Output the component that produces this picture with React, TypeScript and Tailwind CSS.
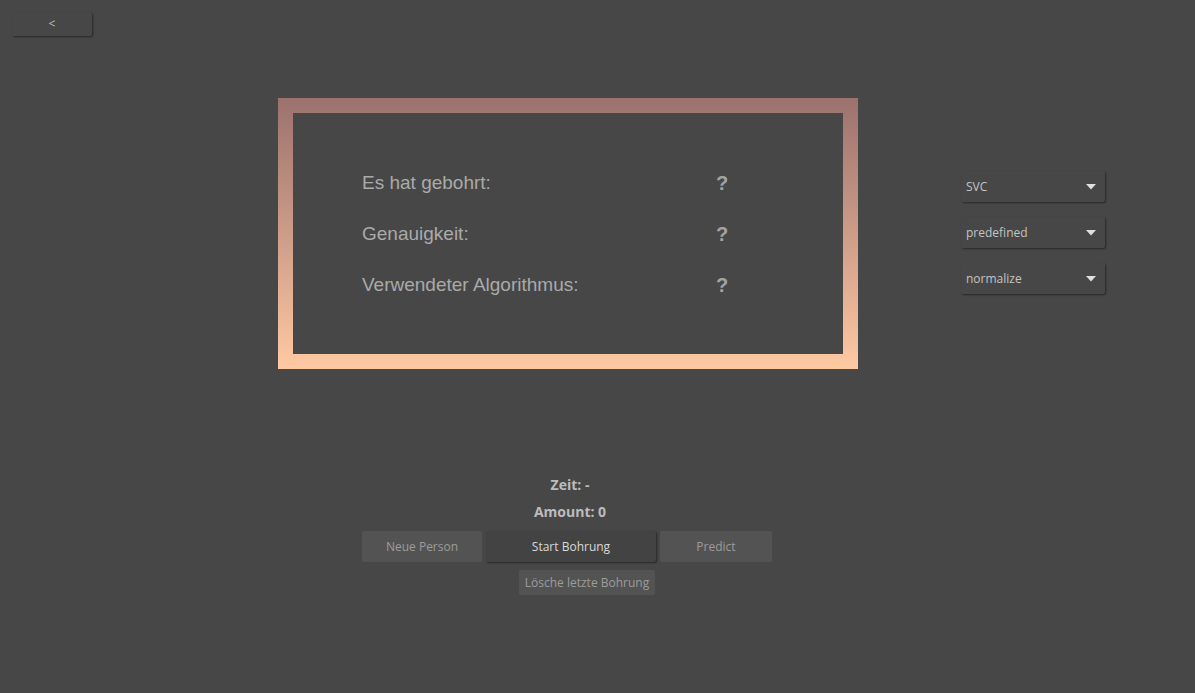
import React from "react";

const rows = ["Es hat gebohrt:", "Genauigkeit:", "Verwendeter Algorithmus:"];
const selects = ["SVC", "predefined", "normalize"];

function Dropdown({ label }: { label: string }) {
  return (
    <div className="w-[144px] h-[31px] flex items-center justify-between pl-[5px] pr-[9px] bg-[#474747] rounded-[2px] shadow-[1px_1px_2px_rgba(0,0,0,0.45)] text-[12px] text-[#c4c4c4] font-['Open_Sans',sans-serif]">
      <span>{label}</span>
      <svg width="10" height="6" viewBox="0 0 10 6">
        <path d="M0 0 L10 0 L5 5.5 Z" fill="#e0e0e0" />
      </svg>
    </div>
  );
}

export default function App() {
  return (
    <div className="w-[1195px] h-[693px] bg-[#474747] overflow-hidden font-['Liberation_Sans',sans-serif]">
      <div className="pt-3 pl-3 flex">
        <button className="block w-[80px] h-[24px] rounded-[2px] bg-[#474747] shadow-[1px_1px_2px_rgba(0,0,0,0.45)] text-[12px] text-[#bdbdbd] font-['Open_Sans',sans-serif]">
          &lt;
        </button>
      </div>

      <div className="flex mt-[62px]">
        <div className="ml-[278px] w-[580px] h-[271px] p-[15px] bg-gradient-to-b from-[#9c726f] to-[#ffc9a2]">
          <div className="w-full h-full bg-[#474747] pl-[69px] pt-[58px] flex flex-col gap-[27px]">
            {rows.map((r) => (
              <div key={r} className="flex items-center h-[24px]">
                <span className="w-[354px] text-[19px] text-[#aaaaaa]">{r}</span>
                <span className="text-[20px] font-bold text-[#a3a3a3]">?</span>
              </div>
            ))}
          </div>
        </div>

        <div className="ml-[103px] mt-[73px] flex flex-col gap-[15px]">
          {selects.map((s) => (
            <Dropdown key={s} label={s} />
          ))}
        </div>
      </div>

      <div className="mt-[102px] pl-[362px] font-['Open_Sans',sans-serif]">
        <div className="w-[416px] text-center text-[14px] font-bold text-[#bcbcbc] leading-[27px]">
          <div>Zeit: -</div>
          <div>Amount: 0</div>
        </div>
        <div className="flex gap-[4px] mt-[6px] text-[12px]">
          <button className="w-[120px] h-[31px] rounded-[2px] bg-[#535353] text-[#9c9c9c]">
            Neue Person
          </button>
          <button className="w-[170px] h-[31px] rounded-[2px] bg-[#434343] text-[#dadada] shadow-[1px_1px_2px_rgba(0,0,0,0.45)]">
            Start Bohrung
          </button>
          <button className="w-[112px] h-[31px] rounded-[2px] bg-[#535353] text-[#9c9c9c]">
            Predict
          </button>
        </div>
        <div className="flex">
          <button className="ml-[157px] mt-[8px] w-[136px] h-[25px] rounded-[2px] bg-[#535353] text-[12px] text-[#9c9c9c]">
            Lösche letzte Bohrung
          </button>
        </div>
      </div>
    </div>
  );
}
